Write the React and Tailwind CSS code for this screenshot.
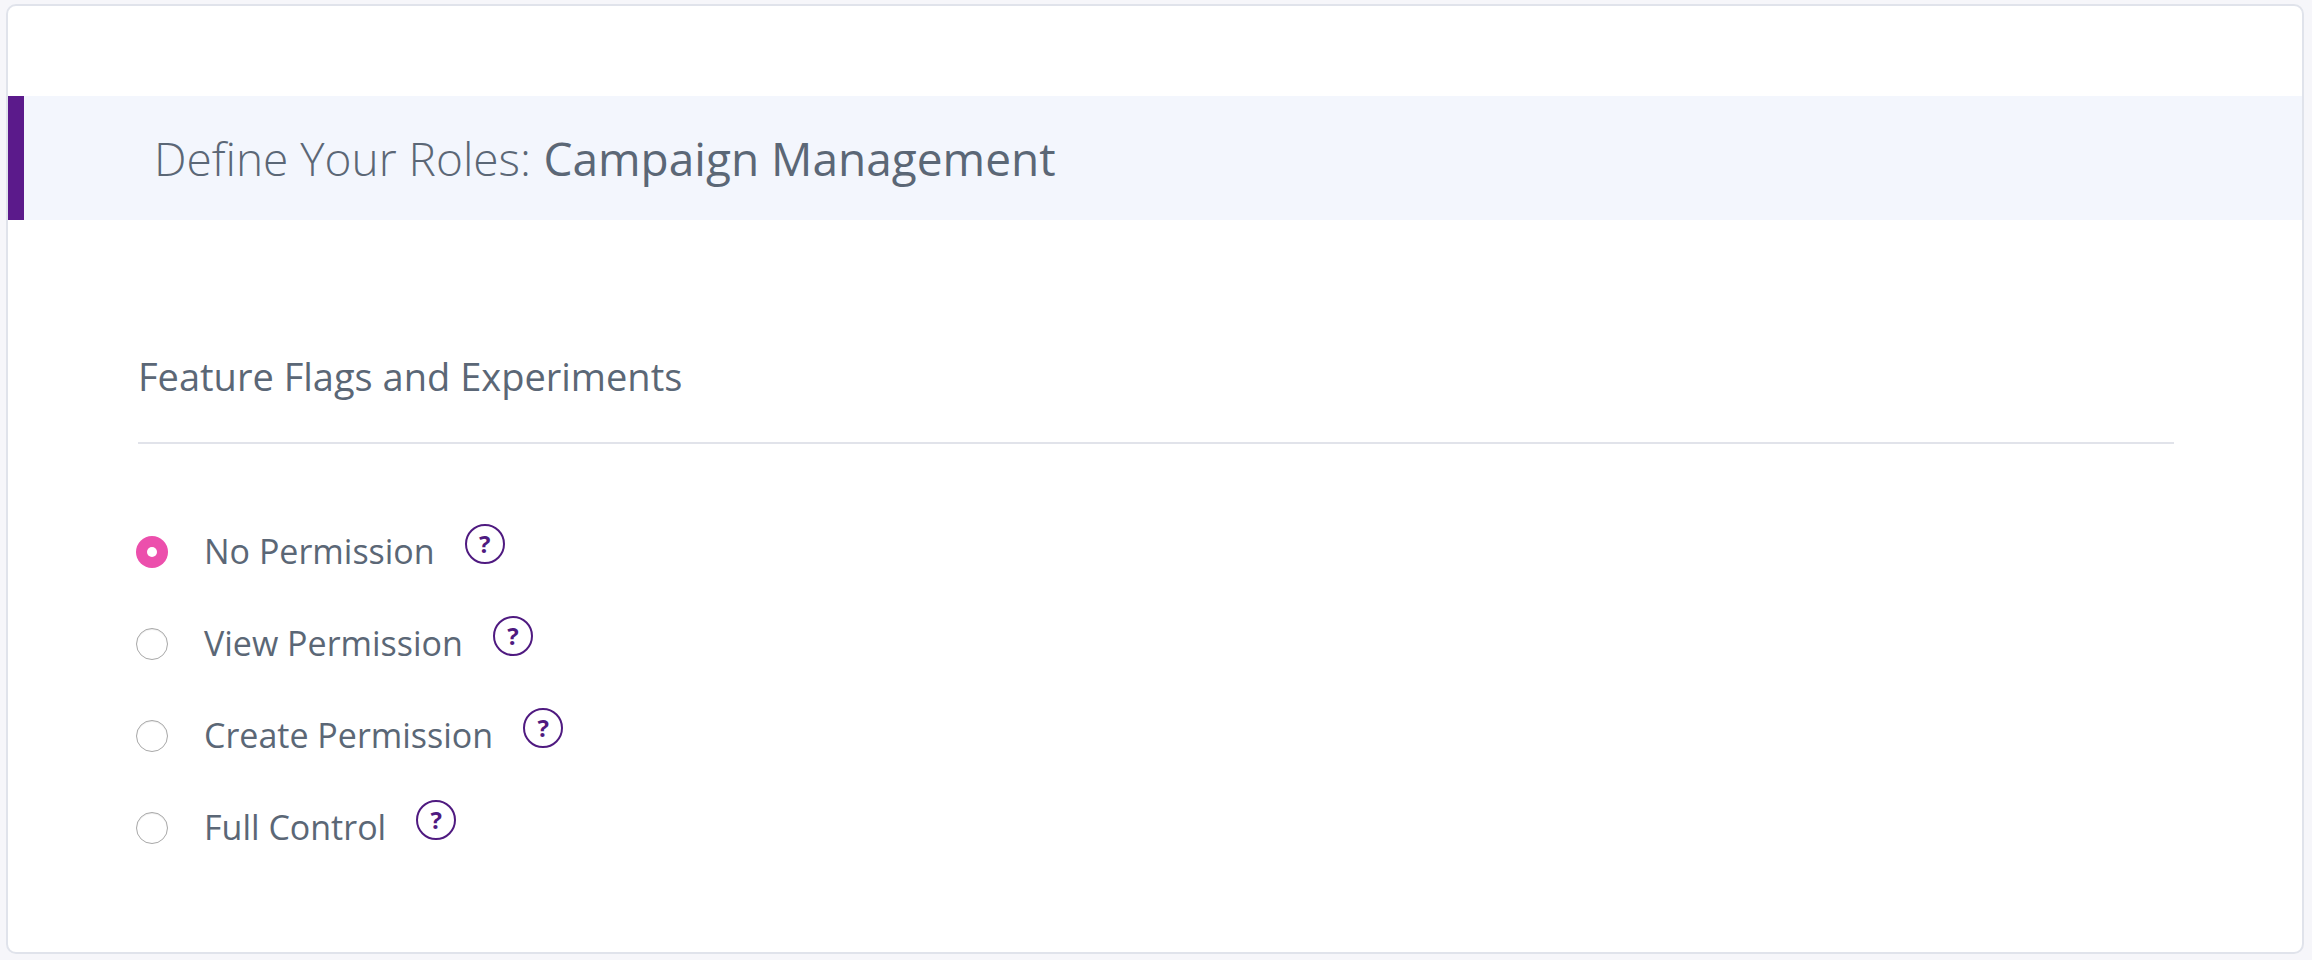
const options = [
  { label: "No Permission", checked: true },
  { label: "View Permission" },
  { label: "Create Permission" },
  { label: "Full Control" },
];

function Radio({ checked }) {
  if (checked) {
    return (
      <span className="mt-[2px] flex h-8 w-8 shrink-0 items-center justify-center rounded-full bg-[#ec4fac]">
        <span className="h-[10px] w-[10px] rounded-full bg-white" />
      </span>
    );
  }
  return <span className="mt-[2px] h-8 w-8 shrink-0 rounded-full border border-[#a8a8a8] bg-white shadow-[inset_0_1px_1px_rgba(0,0,0,0.08)]" />;
}

function Help() {
  return (
    <span className="ml-[30px] -mt-[14px] flex h-10 w-10 shrink-0 items-center justify-center rounded-full border-2 border-[#4f1a80] text-[24px] font-bold leading-none text-[#4f1a80]">
      ?
    </span>
  );
}

export default function App() {
  return (
    <div className="h-[960px] bg-[#f6f6fa] pb-[6px] pl-[6px] pr-2 pt-1 font-['Open_Sans',sans-serif] text-[#5b6776]">
      <div className="h-full overflow-hidden rounded-[10px] border-2 border-[#e0e3eb] bg-white">
        <div className="mt-[90px] flex h-[124px] items-center border-l-[16px] border-[#5b1a8b] bg-[#f3f6fd] pl-[130px] text-[46px]">
          <span className="font-light">Define Your Roles:</span>
          <span className="ml-[12.5px]">Campaign Management</span>
        </div>
        <div className="pl-[130px] pr-[128px] pt-[133px]">
          <div className="border-b-2 border-[#e1e3ea] pb-[43px] text-[38px] leading-[46px]">Feature Flags and Experiments</div>
          <div className="flex flex-col gap-[46px] pt-[84px]">
            {options.map((o) => (
              <div key={o.label} className="-ml-[2px] flex h-[46px] items-center">
                <Radio checked={o.checked} />
                <span className="ml-[36px] text-[34px] leading-[46px]">{o.label}</span>
                <Help />
              </div>
            ))}
          </div>
        </div>
      </div>
    </div>
  );
}
